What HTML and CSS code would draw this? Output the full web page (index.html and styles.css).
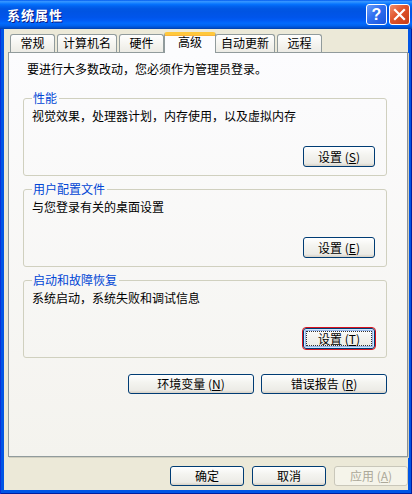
FILE: index.html
```html
<!DOCTYPE html>
<html lang="zh-CN">
<head>
    <meta charset="UTF-8">
    <title>系统属性</title>
    <link rel="stylesheet" href="styles.css">
</head>
<body>

    <div class="window">
        <div class="titlebar">
            <span class="title">系统属性</span>
            <div class="caption-buttons">
                <span class="cap-btn help">?</span>
                <span class="cap-btn close">
                    <svg width="13" height="13" viewBox="0 0 13 13">
                        <path d="M2 2 L11 11 M11 2 L2 11" stroke="#fff" stroke-width="2.2" stroke-linecap="square"/>
                    </svg>
                </span>
            </div>
        </div>

        <div class="client">
            <div class="tabs">
                <span class="tab">常规</span>
                <span class="tab">计算机名</span>
                <span class="tab">硬件</span>
                <span class="tab active">高级</span>
                <span class="tab">自动更新</span>
                <span class="tab">远程</span>
            </div>

            <div class="panel">
                <p class="intro">要进行大多数改动，您必须作为管理员登录。</p>

                <fieldset class="group">
                    <legend>性能</legend>
                    <p class="desc">视觉效果，处理器计划，内存使用，以及虚拟内存</p>
                    <div class="group-actions">
                        <button class="btn">设置 (<u>S</u>)</button>
                    </div>
                </fieldset>

                <fieldset class="group">
                    <legend>用户配置文件</legend>
                    <p class="desc">与您登录有关的桌面设置</p>
                    <div class="group-actions">
                        <button class="btn">设置 (<u>E</u>)</button>
                    </div>
                </fieldset>

                <fieldset class="group">
                    <legend>启动和故障恢复</legend>
                    <p class="desc">系统启动，系统失败和调试信息</p>
                    <div class="group-actions">
                        <button class="btn focused"><span class="focus-ring">设置 (<u>T</u>)</span></button>
                    </div>
                </fieldset>

                <div class="panel-actions">
                    <button class="btn wide">环境变量 (<u>N</u>)</button>
                    <button class="btn wide">错误报告 (<u>R</u>)</button>
                </div>
            </div>

            <div class="dialog-actions">
                <button class="btn dialog-btn">确定</button>
                <button class="btn dialog-btn">取消</button>
                <button class="btn dialog-btn" disabled>应用 (<u>A</u>)</button>
            </div>
        </div>
    </div>

</body>
</html>
```

FILE: styles.css
```css
* {
    box-sizing: border-box;
}

body {
    margin: 0;
    font-family: "Noto Sans CJK SC", "Liberation Sans", sans-serif;
    font-size: 12px;
    line-height: 14px;
    color: #000;
    background: #fff;
}

.window {
    width: 412px;
    height: 494px;
    display: flex;
    flex-direction: column;
    background: #0055e5;
    box-shadow: inset 1px 0 #0831d9, inset -1px 0 #001ea0, inset 0 -1px #001ea0;
}

/* Title bar */
.titlebar {
    height: 29px;
    display: flex;
    align-items: center;
    justify-content: space-between;
    padding: 0 2px 0 7px;
    background: linear-gradient(to bottom, #0058ee 0%, #3593ff 5%, #288eff 8%, #127dff 12%, #036ffc 16%, #0262ee 22%, #0057e5 30%, #0054e3 40%, #0055eb 60%, #005bf5 70%, #026afe 80%, #0062ef 88%, #0052d6 94%, #0040ab 100%);
}

.title {
    color: #fff;
    font-weight: bold;
    font-size: 13px;
    letter-spacing: 1px;
    text-shadow: 1px 1px #0a1883;
}

.caption-buttons {
    display: flex;
    gap: 2px;
}

.cap-btn {
    width: 21px;
    height: 21px;
    border: 1px solid #fff;
    border-radius: 3px;
    display: flex;
    align-items: center;
    justify-content: center;
    color: #fff;
    font-family: "Liberation Sans", sans-serif;
    font-weight: bold;
    font-size: 16px;
}

.help {
    background: linear-gradient(135deg, #6a9cf9 0%, #2f6ff0 45%, #1d55dc 100%);
}

.close {
    background: linear-gradient(135deg, #f08e6e 0%, #e0532a 45%, #c63c17 100%);
}

/* Client area */
.client {
    flex: 1;
    margin: 0 4px 4px;
    background: #ece9d8;
}

.tabs {
    display: flex;
    align-items: flex-end;
    height: 23px;
    padding: 3px 0 0 6px;
    gap: 1px;
}

.tab {
    height: 18px;
    min-width: 45px;
    padding: 1px 5px 0;
    text-align: center;
    border: 1px solid #919b9c;
    border-bottom: none;
    border-radius: 3px 3px 0 0;
    background: linear-gradient(to bottom, #fefefe, #f4f3ee 60%, #ecebe5);
    margin-right: 1px;
}

.tab.active {
    position: relative;
    z-index: 1;
    height: 21px;
    min-width: 52px;
    margin: 0 0 -1px -2px;
    padding-top: 0;
    background: #fcfcfe;
    border-top: 3px solid #ffc83c;
    box-shadow: inset 0 1px #f9b33a;
    border-radius: 3px 3px 0 0;
}

.tab.active + .tab {
    margin-left: -2px;
}

.panel {
    width: 400px;
    height: 405px;
    margin-left: 4px;
    padding: 9px 20px 0 14px;
    border: 1px solid #919b9c;
    border-right-color: #8c9293;
    background: linear-gradient(to bottom, #fcfcfe, #f4f3ee);
    box-shadow: 1px 1px #d0cebf;
}

.intro {
    margin: 0 0 0 4px;
}

/* Group boxes */
.group {
    margin: 15px 0 0;
    padding: 4px 11px 8px 8px;
    border: 1px solid #d0d0bf;
    border-radius: 3px;
    min-width: 0;
}

.group + .group {
    margin-top: 6px;
}

.group legend {
    padding: 0 2px 0 1px;
    color: #0046d5;
}

.desc {
    margin: 0;
}

.group-actions {
    display: flex;
    justify-content: flex-end;
    margin-top: 23px;
}

/* Buttons */
.btn {
    height: 21px;
    width: 72px;
    padding: 0;
    font-family: inherit;
    font-size: 12px;
    line-height: 14px;
    color: #000;
    border: 1px solid #003c74;
    border-radius: 3px;
    background: linear-gradient(to bottom, #ffffff, #f4f4f0 40%, #ecebe6 85%, #d6d0c5);
}

.btn u {
    text-underline-offset: 1px;
}

.btn.focused {
    outline: 1px solid #d8131e;
    box-shadow: inset 0 0 0 1px #cee7ff, inset 0 0 0 2px #98b8ea;
}

.focus-ring {
    display: block;
    margin: 2px;
    height: 15px;
    border: 1px dotted #333;
    line-height: 13px;
}

.panel-actions {
    display: flex;
    justify-content: flex-end;
    gap: 7px;
    margin-top: 16px;
}

.btn.wide {
    width: 126px;
    height: 20px;
}

.dialog-actions {
    display: flex;
    justify-content: flex-end;
    gap: 8px;
    margin-top: 9px;
}

.dialog-btn {
    width: 74px;
    height: 20px;
}

.btn:disabled {
    color: #aca899;
    border-color: #c9c7ba;
    background: #f5f4ea;
}
```
